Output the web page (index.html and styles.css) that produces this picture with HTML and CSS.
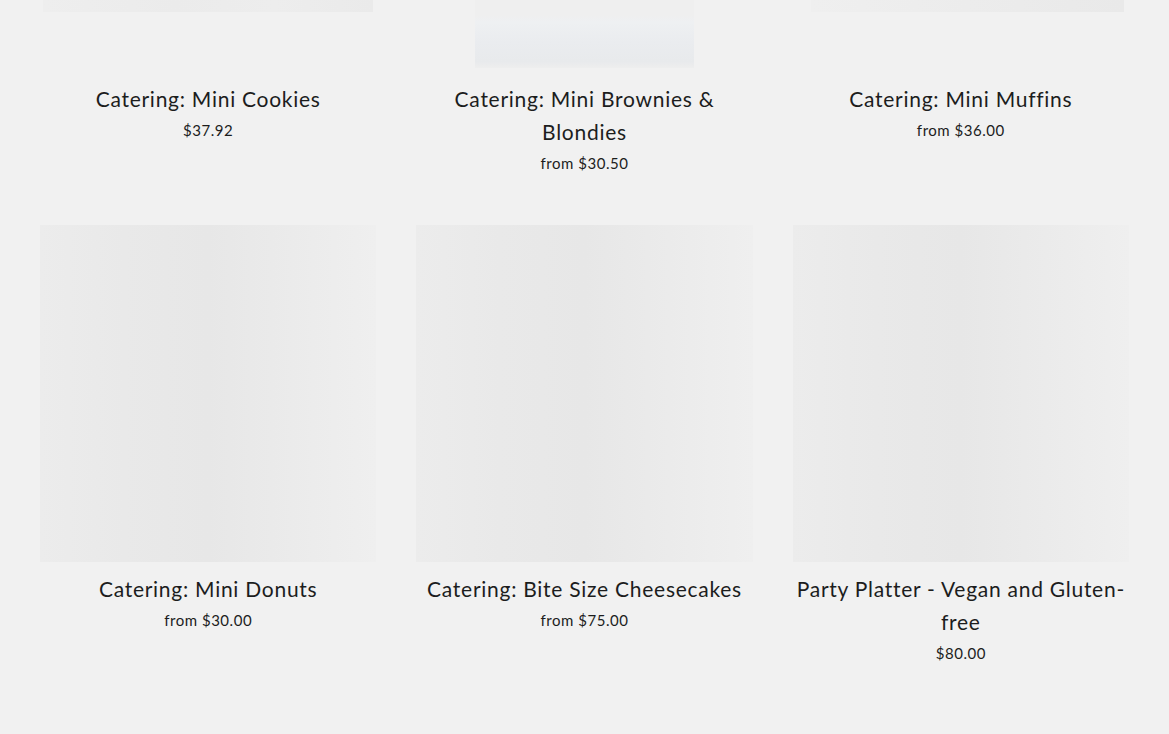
FILE: index.html
```html
<!DOCTYPE html>
<html lang="en">
<head>
<meta charset="utf-8">
<title>Catering</title>
<link rel="stylesheet" href="styles.css">
</head>
<body>
<main class="collection">
  <div class="grid">
    <a class="item" href="#">
      <div class="thumb"><div class="photo photo-wide"></div></div>
      <div class="title">Catering: Mini Cookies</div>
      <div class="price">$37.92</div>
    </a>
    <a class="item" href="#">
      <div class="thumb thumb-end"><div class="photo photo-tall"></div></div>
      <div class="title">Catering: Mini Brownies &amp; Blondies</div>
      <div class="price">from $30.50</div>
    </a>
    <a class="item" href="#">
      <div class="thumb"><div class="photo photo-wide2"></div></div>
      <div class="title">Catering: Mini Muffins</div>
      <div class="price">from $36.00</div>
    </a>
    <a class="item" href="#">
      <div class="thumb"><div class="placeholder"></div></div>
      <div class="title">Catering: Mini Donuts</div>
      <div class="price">from $30.00</div>
    </a>
    <a class="item" href="#">
      <div class="thumb"><div class="placeholder"></div></div>
      <div class="title">Catering: Bite Size Cheesecakes</div>
      <div class="price">from $75.00</div>
    </a>
    <a class="item" href="#">
      <div class="thumb"><div class="placeholder"></div></div>
      <div class="title">Party Platter - Vegan and Gluten-free</div>
      <div class="price">$80.00</div>
    </a>
  </div>
</main>
</body>
</html>
```
FILE: styles.css
```css
html, body {
  margin: 0;
  padding: 0;
  background: #f1f1f1;
  height: 734px;
  overflow: hidden;
}
body {
  font-family: "Lato", "Open Sans", sans-serif;
  color: #1c1d1d;
}
.collection {
  padding: 0 40px;
}
.grid {
  display: grid;
  grid-template-columns: repeat(3, 1fr);
  column-gap: 40px;
  row-gap: 51px;
  margin-top: -264px;
}
.item {
  display: flex;
  flex-direction: column;
  align-items: center;
  text-decoration: none;
  color: inherit;
  text-align: center;
}
.thumb {
  width: 100%;
  aspect-ratio: 1 / 1;
  display: flex;
  align-items: center;
  justify-content: center;
}
.thumb-end {
  align-items: flex-end;
  padding-bottom: 4px;
  box-sizing: border-box;
}
.photo-wide {
  width: 330px;
  height: 216px;
  background: linear-gradient(90deg, #eeeeee, #ebebeb 40%, #ededed 70%, #eaeaea);
}
.photo-wide2 {
  width: 313px;
  height: 216px;
  margin-left: 14px;
  background: linear-gradient(90deg, #efefef, #ececec 50%, #e9e9e9);
}
.photo-tall {
  width: 219px;
  height: 328px;
  background:
    linear-gradient(180deg, rgba(241,241,241,0) 84%, #eef0f2 86%, #eaecef 92%, #e8eaec 98%, #eeeeee 100%),
    #efefef;
}
.placeholder {
  width: 100%;
  height: 100%;
  background: linear-gradient(90deg, #ececec 0%, #e9e9e9 25%, #e7e7e7 50%, #ebebeb 75%, #efefef 100%);
}
.title {
  margin-top: 10px;
  font-size: 21px;
  font-weight: 400;
  line-height: 33px;
  letter-spacing: 0.035em;
}
.price {
  margin-top: 4px;
  font-size: 15px;
  line-height: 22px;
  letter-spacing: 0.035em;
}
```
